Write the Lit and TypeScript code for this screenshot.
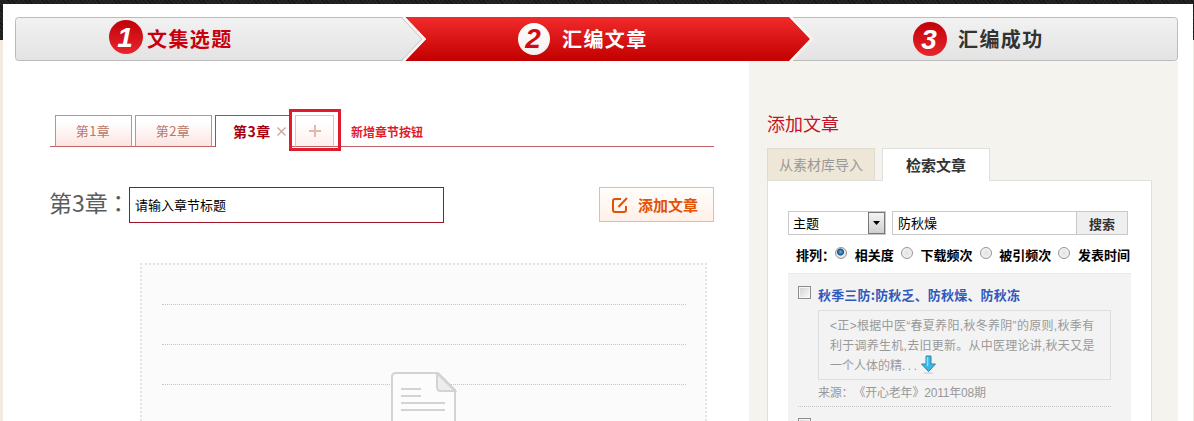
import { LitElement, html, css } from "lit";
import { customElement } from "lit/decorators.js";

@customElement("step-bar")
class StepBar extends LitElement {
  static styles = css`
    :host { display: grid; height: 45px; }
    svg, .labels { grid-area: 1 / 1; }
    svg { display: block; width: 1163px; height: 45px; }
    .labels { display: grid; grid-template-columns: 408px 396px 1fr; z-index: 1; }
    .step { display: flex; align-items: center; height: 44px; font-size: 20px; font-weight: 700; letter-spacing: 1.4px; line-height: 44px; white-space: nowrap; color: #333; }
    .first { color: #c8000c; padding-left: 94px; gap: 4px; }
    .second { color: #fff; padding-left: 94px; gap: 11px; }
    .third { padding-left: 94px; gap: 11px; }
    .num { box-sizing: border-box; width: 34px; height: 34px; border-radius: 50%; background: linear-gradient(#c10008, #e8262c); color: #fff; font: italic 700 28px/35px "Liberation Sans", sans-serif; letter-spacing: 0; text-align: center; padding-right: 2px; }
    .first .num { margin-bottom: 4px; }
    .second .num { width: 32px; height: 32px; line-height: 32px; margin: 0 1px; background: linear-gradient(#fff, #f4efec); color: #cf0c12; }
  `;
  render() {
    return html`
      <svg viewBox="0 0 1163 45">
        <defs>
          <linearGradient id="grey" x1="0" y1="0" x2="0" y2="1"><stop offset="0" stop-color="#f3f2f3" /><stop offset="1" stop-color="#e3e3e3" /></linearGradient>
          <linearGradient id="red" x1="0" y1="0" x2="0" y2="1"><stop offset="0" stop-color="#f12a2c" /><stop offset="1" stop-color="#c20000" /></linearGradient>
        </defs>
        <rect x=".5" y=".5" width="1162" height="43" rx="3" fill="url(#grey)" stroke="#bdbcbd" />
        <path d="M388 0H777L798 22L777 44H388L409 22Z" fill="#f8f6f6" />
        <path d="M386 0L407 22L386 44" fill="none" stroke="#c8c8c8" />
        <path d="M390 0L411 22L390 44H774L795 22L774 0Z" fill="url(#red)" />
        <path d="M388.500 0L409.500 22L388.500 44M776 0L797 22L776 44" fill="none" stroke="#fbf3f0" stroke-width="2.500" />
      </svg>
      <div class="labels">
        <div class="step first"><span class="num">1</span><span>文集选题</span></div>
        <div class="step second"><span class="num">2</span><span>汇编文章</span></div>
        <div class="step third"><span class="num">3</span><span>汇编成功</span></div>
      </div>`;
  }
}

@customElement("chapter-editor")
class ChapterEditor extends LitElement {
  static styles = css`
    :host { display: block; box-sizing: border-box; width: 734px; padding: 48px 35px 0; overflow: hidden; }
    .tabs { display: flex; height: 42px; background: linear-gradient(#bd6363, #bd6363) 0 37px / 664px 1px no-repeat; padding-left: 5px; box-sizing: border-box; }
    .tab { box-sizing: border-box; width: 77px; height: 32px; margin: 6px 3px 0 0; border: 1px solid #cf8c82; border-bottom-color: #bd6363; background: linear-gradient(#fff 20%, #fbe5e1); color: #bb7768; font-size: 13px; line-height: 30px; text-align: center; letter-spacing: .5px; padding-right: 1px; white-space: nowrap; }
    .current { display: flex; width: 74px; margin-right: 0; padding: 0 0 0 17px; border-color: #a9485a; border-right: 0; border-bottom: 0; background: #fff; color: #a90010; font-size: 14px; font-weight: 700; }
    .close { width: 9px; height: 9px; margin: 11px 0 0 6px; flex: none; }
    .callout { box-sizing: border-box; width: 52px; height: 42px; border: 3px solid #e01c2c; padding: 3px 3px 0; }
    .add { box-sizing: border-box; width: 39px; height: 32px; border: 1px solid #e6c3b5; border-bottom-color: #bd6363; background: linear-gradient(#fff 20%, #fdf0ed); display: grid; place-items: center; }
    .note { margin-left: 10px; color: #e01c2c; font-size: 12px; font-weight: 700; line-height: 45px; white-space: nowrap; }
    .head { display: flex; margin-top: 36px; height: 36px; }
    .name { width: 79px; font-size: 23px; line-height: 31px; color: #5c5c5c; white-space: nowrap; flex: none; text-indent: -1px; }
    .colon { font-family: "Noto Sans CJK TC", sans-serif; margin-left: -1px; }
    .field { box-sizing: border-box; width: 315px; border: 1px solid #9c1428; padding-left: 5px; font-size: 13px; line-height: 33px; color: #000; }
    .btn { box-sizing: border-box; width: 115px; height: 35px; margin-left: 155px; border: 1px solid #efb896; background: linear-gradient(#fffdfb, #fff0e8); display: flex; align-items: center; padding-left: 12px; gap: 10px; color: #e25206; font-size: 15px; font-weight: 700; white-space: nowrap; }
    .sheet { box-sizing: border-box; width: 567px; height: 170px; margin: 40px 0 0 90px; border: 2px dotted #e4e4e4; background: #fbfbfb; padding: 0 19px 0 20px; display: grid; }
    .rules, .page { grid-area: 1 / 1; }
    .rules div { height: 39px; border-bottom: 1px dotted #c4c4c4; }
    .page { margin: 107px 0 0 229px; z-index: 1; }
  `;
  render() {
    return html`
      <div class="tabs">
        <div class="tab">第1章</div>
        <div class="tab">第2章</div>
        <div class="tab current">第3章<svg class="close" viewBox="0 0 9 9"><path d="M.5 .5L8.500 8.500M8.500 .5L.5 8.500" stroke="#c9a49c" stroke-width="1.200" /></svg></div>
        <div class="callout"><div class="add"><svg width="12" height="12"><path d="M6 0V12M0 6H12" stroke="#e2b8ab" stroke-width="2" /></svg></div></div>
        <div class="note">新增章节按钮</div>
      </div>
      <div class="head">
        <div class="name">第3章<span class="colon">：</span></div>
        <div class="field">请输入章节标题</div>
        <div class="btn"><svg width="16" height="16" fill="none" stroke="#e25206" stroke-width="2"><path d="M9 2H3Q1 2 1 4V13Q1 15 3 15H12Q14 15 14 13V9" /><path d="M15 1L6.500 10" /></svg><span>添加文章</span></div>
      </div>
      <div class="sheet">
        <div class="rules"><div></div><div></div><div></div></div>
        <svg class="page" width="66" height="80" fill="none" stroke="#d3d3d3" stroke-width="2">
          <path d="M1 80V5Q1 1 5 1H47L64 18V80" fill="#fcfcfc" />
          <path d="M46 1V15Q46 19 50 19H64Z" fill="#ededed" />
          <path d="M10 17H30M10 24H30M10 31H54M10 38H54" />
        </svg>
      </div>`;
  }
}

@customElement("article-search")
class ArticleSearch extends LitElement {
  static styles = css`
    :host { display: block; box-sizing: border-box; width: 429px; height: 360px; padding: 50px 26px 0 18px; background: #f5f3ee; overflow: hidden; }
    .title { height: 37px; font-size: 18px; line-height: 24px; color: #c3142a; white-space: nowrap; }
    .tabs { display: flex; gap: 7px; height: 33px; margin-bottom: -1px; }
    .tab { box-sizing: border-box; width: 108px; height: 32px; border: 1px solid #dddad0; border-bottom: 0; background: #eee6d6; color: #999; font-size: 14px; line-height: 31px; text-align: center; white-space: nowrap; }
    .on { height: 33px; background: #fff; border-color: #dfdfdc; color: #333; font-size: 15px; font-weight: 700; z-index: 1; }
    .panel { box-sizing: border-box; width: 385px; height: 300px; border: 1px solid #dfdfdc; background: #fff; padding: 30px 0 0 20px; }
    .search { display: flex; height: 25px; font-size: 13px; line-height: 22px; color: #000; white-space: nowrap; }
    .select, .query, .go { box-sizing: border-box; height: 24px; border: 1px solid #c8c8c8; padding-left: 5px; }
    .select { width: 98px; display: flex; justify-content: space-between; margin-right: 6px; padding-left: 4px; }
    .drop { box-sizing: border-box; width: 17px; height: 22px; border: 1px solid #777; background: linear-gradient(#f3f3f3, #d0d0d0); display: grid; place-items: center; }
    .query { width: 185px; }
    .go { width: 52px; margin-left: -1px; padding: 0; background: #efefef; text-align: center; font-weight: 700; color: #333; line-height: 23px; }
    .sort { display: flex; align-items: center; height: 26px; padding: 5px 0 0 8px; font-size: 13px; font-weight: 700; color: #000; white-space: nowrap; }
    .sort .by { width: 39px; }
    .radio { box-sizing: border-box; width: 12px; height: 12px; border-radius: 50%; border: 1px solid #959595; background: radial-gradient(#e2e2e2, #f8f8f8); margin: 0 7.700px 2px 7.100px; flex: none; }
    .by + .radio { margin-left: 0; }
    .picked { background: radial-gradient(circle at 45% 40%, #6db7e6 0, #174f80 3px, #dfe9f0 4px); }
    .results { box-sizing: border-box; width: 343px; height: 160px; margin-top: 6px; border-top: 1px solid #eaeaea; background: #f3f3f3; padding: 12px 20px 0 10px; }
    .row { display: grid; grid-template-columns: 20px 293px; height: 120px; border-bottom: 1px dotted #c6c6c6; margin-bottom: 11px; }
    .check { box-sizing: border-box; width: 13px; height: 13px; border: 1px solid #8c8c8c; background: linear-gradient(135deg, #d4d4d4, #f8f8f8) 1px 1px / 9px 9px no-repeat #f6f6f6; }
    .link { color: #3059bd; font-size: 13px; font-weight: 700; line-height: 18px; height: 24px; letter-spacing: .18px; white-space: nowrap; }
    .abstract { box-sizing: border-box; width: 293px; height: 70px; border: 1px solid #dedede; padding: 5px 0 0 11px; color: #999; font: 12px/20px "Liberation Sans", "Noto Sans CJK SC", sans-serif; white-space: nowrap; }
    .l1 { letter-spacing: .31px; }
    .l2 { letter-spacing: .26px; }
    .l3 { display: flex; height: 20px; }
    .l3 svg { margin-top: -1px; }
    .dots { letter-spacing: 2.500px; }
    .source { color: #999; font: 12px/27px "Liberation Sans", "Noto Sans CJK SC", sans-serif; letter-spacing: -.2px; text-spacing-trim: space-all; white-space: nowrap; }
  `;
  render() {
    const radio = (label: string, on = false) => html`<span class="radio ${on ? "picked" : ""}"></span><span>${label}</span>`;
    return html`
      <div class="title">添加文章</div>
      <div class="tabs"><div class="tab">从素材库导入</div><div class="tab on">检索文章</div></div>
      <div class="panel">
        <div class="search">
          <div class="select"><span>主题</span><span class="drop"><svg width="7" height="4"><path d="M0 0H7L3.500 4Z" /></svg></span></div>
          <div class="query">防秋燥</div>
          <div class="go">搜索</div>
        </div>
        <div class="sort"><span class="by">排列：</span>${radio("相关度", true)}${radio("下载频次")}${radio("被引频次")}${radio("发表时间")}</div>
        <div class="results">
          <div class="row">
            <span class="check"></span>
            <div>
              <div class="link">秋季三防:防秋乏、防秋燥、防秋冻</div>
              <div class="abstract">
                <div class="l1">&lt;正&gt;根据中医“春夏养阳,秋冬养阴”的原则,秋季有</div>
                <div class="l2">利于调养生机,去旧更新。从中医理论讲,秋天又是</div>
                <div class="l3"><span>一个人体的精<span class="dots">...</span></span><svg width="17" height="20" viewBox="0 0 17 20"><ellipse cx="8.500" cy="18" rx="5" ry="1" fill="#d5dde0" /><path d="M6 1H11V9H15.500L8.500 16.500L1.500 9H6Z" fill="#38b6e6" stroke="#3187a5" /><path d="M7.500 2V11" stroke="#8de0fa" stroke-width="1.500" /></svg></div>
              </div>
              <div class="source">来源：《开心老年》2011年08期</div>
            </div>
          </div>
          <div class="row"><span class="check"></span></div>
        </div>
      </div>`;
  }
}

@customElement("app-root")
class AppRoot extends LitElement {
  static styles = css`
    :host { display: block; box-sizing: border-box; width: 1194px; height: 421px; overflow: hidden; padding: 4px 1px 0 3px; background: repeating-linear-gradient(45deg, #161616 0 1px, #242424 1px 3px) 0 0 / 100% 40px no-repeat #f3eae0; font-family: "Noto Sans CJK SC", sans-serif; }
    .card { box-sizing: border-box; height: 417px; background: #fff; padding: 13px 15px 0 12px; overflow: hidden; }
    .cols { display: flex; margin-top: -1px; }
  `;
  render() {
    return html`<div class="card"><step-bar></step-bar><div class="cols"><chapter-editor></chapter-editor><article-search></article-search></div></div>`;
  }
}
